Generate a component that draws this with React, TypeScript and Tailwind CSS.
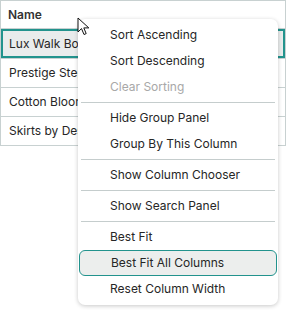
import React from "react";

const rows = ["Lux Walk Boots", "Prestige Steps", "Cotton Blooms", "Skirts by Design"];

type Entry = { label: string; disabled?: boolean; hover?: boolean } | "sep";

const menu: Entry[] = [
  { label: "Sort Ascending" },
  { label: "Sort Descending" },
  { label: "Clear Sorting", disabled: true },
  "sep",
  { label: "Hide Group Panel" },
  { label: "Group By This Column" },
  "sep",
  { label: "Show Column Chooser" },
  "sep",
  { label: "Show Search Panel" },
  "sep",
  { label: "Best Fit" },
  { label: "Best Fit All Columns", hover: true },
  { label: "Reset Column Width" },
];

export default function App() {
  return (
    <div
      className="relative h-[311px] w-[286px] overflow-hidden bg-white text-[12px] text-[#262626]"
      style={{ fontFamily: "Inter, 'Noto Sans', sans-serif" }}
    >
      {/* grid */}
      <div className="w-[286px] border border-[#c8d1d1]">
        <div className="flex h-[28px] items-center border-b border-[#c8d1d1] px-[7px] pt-px font-semibold text-[#333]">
          Name
        </div>
        {rows.map((r, i) => (
          <div
            key={r}
            className={
              "flex h-[29px] items-center whitespace-nowrap px-[8px] " +
              (i === 0
                ? "bg-[#e9ecec] shadow-[inset_0_0_0_2px_#22938d]"
                : "border-t border-[#c8d1d1]")
            }
          >
            {r}
          </div>
        ))}
      </div>

      {/* context menu */}
      <div className="absolute left-[78px] top-[19px] w-[200px] rounded-[7px] bg-white py-[3px] shadow-[0_1px_4px_rgba(0,0,0,0.22)]">
        {menu.map((m, i) =>
          m === "sep" ? (
            <div key={i} className="mx-[3px] my-[2px] h-px bg-[#c5cdcd]" />
          ) : (
            <div
              key={i}
              className={
                "mx-[1px] flex h-[26px] items-center whitespace-nowrap rounded-[6px] pl-[31px] " +
                (m.disabled ? "text-[#a8a8a8] " : "") +
                (m.hover ? "border border-[#22938d] bg-[#eceeed] pl-[30px]" : "")
              }
            >
              {m.label}
            </div>
          )
        )}
      </div>

      {/* mouse cursor */}
      <svg
        className="absolute left-[77px] top-[17px]"
        width="14"
        height="20"
        viewBox="0 0 14 20"
      >
        <path
          d="M1 1 L1 15 L4.5 11.6 L7 17.5 L9.2 16.6 L6.8 10.9 L11.8 10.9 Z"
          fill="white"
          stroke="#111"
          strokeWidth="1"
          strokeLinejoin="round"
        />
      </svg>
    </div>
  );
}
